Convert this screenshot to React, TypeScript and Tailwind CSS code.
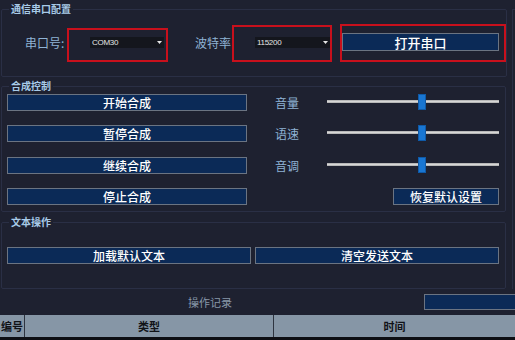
import React from 'react';

const cjk = "font-['Noto_Sans_CJK_SC','Noto_Sans',sans-serif]";

function Btn({ children, className = '' }: { children: React.ReactNode; className?: string }) {
  return (
    <div
      className={`flex items-center justify-center h-[17px] bg-[#0b2a57] border border-[#6b7482] text-white text-[12px] font-medium leading-none ${className}`}
    >
      {children}
    </div>
  );
}

function Combo({ value, width }: { value: string; width: string }) {
  return (
    <div className={`flex items-center h-[11px] bg-[#14161d] ${width}`}>
      <span className="pl-[2px] text-[8px] leading-none text-[#e6e6e6] font-['Liberation_Sans',sans-serif] tracking-[-0.3px]">
        {value}
      </span>
      <span className="ml-auto flex items-center justify-center w-[9px] h-full">
        <svg width="5" height="3" viewBox="0 0 5 3">
          <path d="M0 0h5L2.5 3z" fill="#e6e6e6" />
        </svg>
      </span>
    </div>
  );
}

function Slider({ pos }: { pos: number }) {
  return (
    <div className="relative w-[172px] h-[16px] flex items-center -translate-y-px">
      <div className="w-full h-[3px] bg-[#d6d6d6] border-y border-[#8c8c8c]/40" />
      <div className="absolute top-0 w-[8px] h-[16px] bg-[#1976d2] border border-[#0f5aa8]" style={{ left: pos }} />
    </div>
  );
}

function Group({ title, className = '', children }: { title: string; className?: string; children: React.ReactNode }) {
  return (
    <fieldset className={`ml-px w-[505px] border border-[#2a2f45] rounded-[2px] ${className}`}>
      <legend className="ml-[7px] px-[2px] text-[10px] leading-[10px] font-bold text-[#a8cbe8]">{title}</legend>
      {children}
    </fieldset>
  );
}

export default function App() {
  const rows = [
    { btn: '开始合成', label: '音量', mt: 'mt-[3px]' },
    { btn: '暂停合成', label: '语速', mt: 'mt-[14px]' },
    { btn: '继续合成', label: '音调', mt: 'mt-[15px]' },
  ];

  return (
    <div className={`w-[515px] h-[340px] overflow-hidden bg-[#1e2130] ${cjk}`}>
      <div className="flex">
        <div className="w-[512px] flex flex-col">
          <Group title="通信串口配置" className="mt-[4px]">
            <div className="flex items-start h-[62px]">
              <span className="ml-[23px] w-[42px] mt-[23px] text-[12px] leading-[12px] text-[#8fb3d5]">串口号:</span>
              <div className="w-[101px] h-[34px] mt-[14px] border-2 border-[#c8101c] pl-[21px] pt-[7px]">
                <Combo value="COM30" width="w-[74px]" />
              </div>
              <span className="ml-[27px] w-[37px] mt-[23px] text-[12px] leading-[12px] text-[#8fb3d5]">波特率</span>
              <div className="w-[100px] h-[37px] mt-[11px] border-2 border-[#c8101c] pl-[21px] pt-[10px]">
                <Combo value="115200" width="w-[75px]" />
              </div>
              <div className="ml-[8px] w-[166px] h-[38px] mt-[10px] border-2 border-[#c8101c] pt-[7px]">
                <Btn className="w-[157px] h-[18px] text-[13px]">打开串口</Btn>
              </div>
            </div>
          </Group>

          <Group title="合成控制" className="mt-[4px]">
            <div className="flex flex-col pb-[6px]">
              {rows.map((r) => (
                <div key={r.btn} className={`flex items-center h-[17px] ${r.mt}`}>
                  <Btn className="ml-[5px] w-[240px]">{r.btn}</Btn>
                  <span className="ml-[28px] w-[52px] text-[12px] leading-none text-[#8fb3d5]">{r.label}</span>
                  <Slider pos={91} />
                </div>
              ))}
              <div className="flex items-center h-[17px] mt-[14px]">
                <Btn className="ml-[5px] w-[240px]">停止合成</Btn>
                <Btn className="ml-[146px] w-[106px]">恢复默认设置</Btn>
              </div>
            </div>
          </Group>

          <Group title="文本操作" className="mt-[5px]">
            <div className="flex pt-[20px] pb-[24px]">
              <Btn className="ml-[5px] w-[244px]">加载默认文本</Btn>
              <Btn className="ml-[4px] w-[244px]">清空发送文本</Btn>
            </div>
          </Group>
        </div>
        <div className="flex-1 mt-[9px] h-[280px] border-l border-t border-[#2a2f45]" />
      </div>

      <div className="flex items-center h-[26px]">
        <span className="ml-[188px] text-[11px] leading-none text-[#8797a8]">操作记录</span>
        <div className="ml-auto w-[91px] h-[16px] bg-[#0b2a57] border-y border-l border-[#6b7482]" />
      </div>

      <div className="flex h-[22px] bg-[#8696a6] text-[11px] font-bold text-[#111318] leading-none">
        <div className="w-[25px] flex items-center justify-center border-r border-[#2e3440]">编号</div>
        <div className="w-[249px] flex items-center justify-center border-r border-[#2e3440]">类型</div>
        <div className="flex-1 flex items-center justify-center">时间</div>
      </div>
      <div className="h-[3px] bg-[#0e0f14]" />
    </div>
  );
}
